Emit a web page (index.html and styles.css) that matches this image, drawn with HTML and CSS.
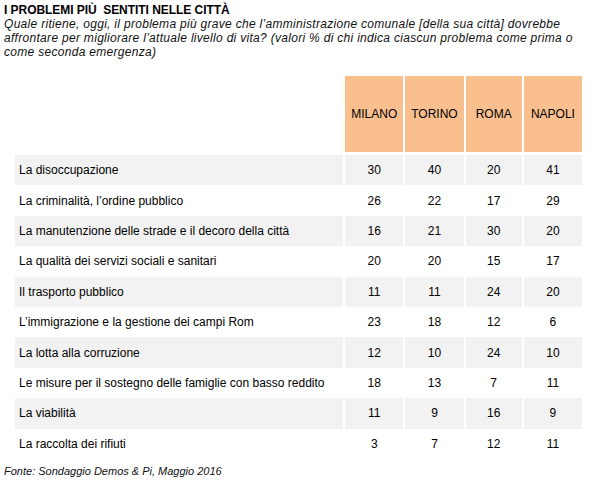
FILE: index.html
```html
<!DOCTYPE html>
<html lang="it">
<head>
<meta charset="utf-8">
<link rel="stylesheet" href="styles.css">
</head>
<body>
<div class="page">
  <h1 class="title">I PROBLEMI PIÙ&nbsp; SENTITI NELLE CITTÀ</h1>
  <p class="subtitle">Quale ritiene, oggi, il problema più grave che l’amministrazione comunale [della sua città] dovrebbe affrontare per migliorare l’attuale livello di vita? (valori % di chi indica ciascun problema come prima o come seconda emergenza)</p>
  <table class="data">
    <colgroup>
      <col class="c-label">
      <col class="c-city">
      <col class="c-city">
      <col class="c-roma">
      <col class="c-city">
    </colgroup>
    <thead>
      <tr>
        <th class="blank"></th>
        <th class="city">MILANO</th>
        <th class="city">TORINO</th>
        <th class="city">ROMA</th>
        <th class="city">NAPOLI</th>
      </tr>
    </thead>
    <tbody>
      <tr class="odd"><td class="label">La disoccupazione</td><td>30</td><td>40</td><td>20</td><td>41</td></tr>
      <tr><td class="label">La criminalità, l’ordine pubblico</td><td>26</td><td>22</td><td>17</td><td>29</td></tr>
      <tr class="odd"><td class="label">La manutenzione delle strade e il decoro della città</td><td>16</td><td>21</td><td>30</td><td>20</td></tr>
      <tr><td class="label">La qualità dei servizi sociali e sanitari</td><td>20</td><td>20</td><td>15</td><td>17</td></tr>
      <tr class="odd"><td class="label">Il trasporto pubblico</td><td>11</td><td>11</td><td>24</td><td>20</td></tr>
      <tr><td class="label">L’immigrazione e la gestione dei campi Rom</td><td>23</td><td>18</td><td>12</td><td>6</td></tr>
      <tr class="odd"><td class="label">La lotta alla corruzione</td><td>12</td><td>10</td><td>24</td><td>10</td></tr>
      <tr><td class="label">Le misure per il sostegno delle famiglie con basso reddito</td><td>18</td><td>13</td><td>7</td><td>11</td></tr>
      <tr class="odd"><td class="label">La viabilità</td><td>11</td><td>9</td><td>16</td><td>9</td></tr>
      <tr><td class="label">La raccolta dei rifiuti</td><td>3</td><td>7</td><td>12</td><td>11</td></tr>
    </tbody>
  </table>
  <p class="source">Fonte: Sondaggio Demos &amp; Pi, Maggio 2016</p>
</div>
</body>
</html>
```
FILE: styles.css
```css
html, body {
  margin: 0;
  padding: 0;
  background: #fff;
}
body {
  font-family: "Liberation Sans", Arial, sans-serif;
  color: #000;
}
.page {
  padding: 3px 4px 0 4px;
}
.title {
  margin: 0;
  font-size: 12px;
  font-weight: bold;
  line-height: 14px;
  letter-spacing: -0.05px;
}
.subtitle {
  margin: 0;
  max-width: 583px;
  font-size: 12px;
  font-style: italic;
  line-height: 14px;
  letter-spacing: 0.3px;
  color: #111;
}
.data {
  margin: 17px 0 0 9px;
  border-collapse: separate;
  border-spacing: 2px 0;
  table-layout: fixed;
  width: 571px;
  font-size: 12px;
}
.c-label { width: 327px; }
.c-city { width: 58px; }
.c-roma { width: 56px; }
.data th, .data td {
  padding: 0;
  text-align: center;
  vertical-align: middle;
}
.data th.city {
  background: #FABF8F;
  height: 76px;
  font-weight: normal;
  border-bottom: 3px solid #fff;
  background-clip: padding-box;
}
.data th.blank {
  height: 76px;
  border-bottom: 3px solid #fff;
}
.data td {
  height: 30.4px;
}
.data td.label {
  text-align: left;
  padding-left: 4px;
}
.data tr.odd td {
  background: #F2F2F2;
}
.source {
  margin: 6px 0 0 0;
  font-size: 11px;
  font-style: italic;
  color: #111;
}
```
